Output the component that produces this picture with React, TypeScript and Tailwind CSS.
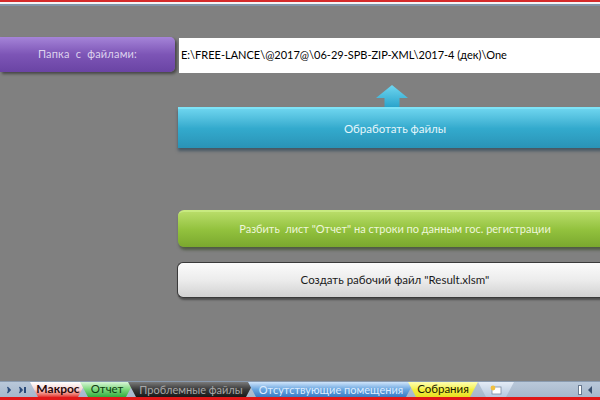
import { ChevronRight } from 'lucide-react'

type Sheet = { name: string; tab: string; text: string }

const sheets: Sheet[] = [
  { name: 'Макрос', tab: 'w-[56px] bg-gradient-to-b from-[#ffffff] via-[#f6d6d6] to-[#e03030]', text: 'text-[#2a0808] font-bold text-[12px]' },
  { name: 'Отчет', tab: 'w-[54px] bg-gradient-to-b from-[#d8f5d8] via-[#7cd87c] to-[#2fae3f]', text: 'text-[#0f3d12] text-[11.5px]' },
  { name: 'Проблемные файлы', tab: 'w-[126px] bg-gradient-to-b from-[#7a7a7a] via-[#3a3a3a] to-[#1a1a1a]', text: 'text-[#a8a8a8] text-[11px]' },
  { name: 'Отсутствующие помещения', tab: 'w-[166px] bg-gradient-to-b from-[#cfe4fa] via-[#6aa6e0] to-[#3a7cc4]', text: 'text-[#dcecff] text-[11px]' },
  { name: 'Собрания', tab: 'w-[70px] bg-gradient-to-b from-[#ffffb0] via-[#f4f040] to-[#e8e020]', text: 'text-[#1a1a00] text-[11.5px]' },
]

function SheetTabs() {
  return (
    <div className="h-[16px] flex items-stretch bg-gradient-to-b from-[#b9c8da] to-[#a6b7cb] border-t border-[#8a9bb0]">
      <div className="w-[30px] flex items-center gap-[2px] pl-[4px] text-[#2a4a7a]">
        <ChevronRight className="w-[10px] h-[10px] fill-[#2a4a7a]" strokeWidth={3} />
        <div className="flex items-center">
          <ChevronRight className="w-[10px] h-[10px] fill-[#2a4a7a]" strokeWidth={3} />
          <div className="w-[1.5px] h-[6px] bg-[#2a4a7a] -ml-[2px]" />
        </div>
      </div>
      {sheets.map((s) => (
        <div
          key={s.name}
          className={`${s.tab} -mr-[6px] flex items-center justify-center leading-none [clip-path:polygon(0_0,100%_0,calc(100%-8px)_100%,8px_100%)]`}
        >
          <span className={`${s.text} pb-[1px] whitespace-nowrap`}>{s.name}</span>
        </div>
      ))}
      <div className="w-[36px] ml-[6px] flex items-center justify-center bg-gradient-to-b from-[#e4ecf6] to-[#b6c8de] [clip-path:polygon(0_0,100%_0,calc(100%-8px)_100%,8px_100%)]">
        <svg width="14" height="10" viewBox="0 0 14 10">
          <rect x="3" y="2" width="9" height="7" fill="#fff" stroke="#7a8aa0" strokeWidth="0.8" />
          <circle cx="4" cy="3" r="2.4" fill="#f0c040" />
        </svg>
      </div>
      <div className="flex-1" />
      <div className="flex items-center gap-[6px] pr-[8px]">
        <div className="w-[4px] h-[10px] bg-white border border-[#6a7a90]" />
        <div className="w-0 h-0 border-y-[4px] border-y-transparent border-r-[4px] border-r-[#3a5070]" />
      </div>
    </div>
  )
}

export default function App() {
  return (
    <div className="w-[600px] h-[400px] flex flex-col bg-[#808080] overflow-hidden font-['Lato','Open_Sans',sans-serif]">
      {/* window frame stripes */}
      <div className="h-[2px] bg-[#d42a2a]" />
      <div className="h-[2px] bg-[#f4f4f6]" />
      <div className="h-[2px] bg-[#7f94a8]" />

      <div className="flex-1 flex flex-col">
        {/* folder row */}
        <div className="mt-[31px] flex items-start">
          <div className="w-[175px] h-[35px] rounded-r-[5px] bg-gradient-to-b from-[#a584d8] via-[#7d55b6] to-[#6a44a4] shadow-[2px_2px_3px_rgba(0,0,0,0.45)] flex items-center justify-center">
            <span className="text-[11px] text-[#ddd2ee] tracking-[0.2px]">Папка&nbsp; с&nbsp; файлами:</span>
          </div>
          <div className="ml-[4px] mt-[1px] flex-1 h-[35px] bg-white flex items-center px-[2px]">
            <span className="text-[11px] text-black">E:\FREE-LANCE\@2017@\06-29-SPB-ZIP-XML\2017-4 (дек)\One</span>
          </div>
        </div>

        {/* actions column */}
        <div className="ml-[178px] -mr-[12px] flex flex-col">
          <div className="mt-[12px] h-[22px] flex justify-center pr-[6px]">
            <svg width="32" height="22" viewBox="0 0 32 22">
              <defs>
                <linearGradient id="arrowFill" x1="0" y1="0" x2="0" y2="1">
                  <stop offset="0" stopColor="#6fd6f0" />
                  <stop offset="1" stopColor="#2aa4cc" />
                </linearGradient>
              </defs>
              <path d="M16 0 L32 13 L23.5 13 L23.5 22 L8.5 22 L8.5 13 L0 13 Z" fill="url(#arrowFill)" />
            </svg>
          </div>
          <button className="h-[41px] bg-gradient-to-b from-[#6cd4ee] via-[#33aacd] to-[#2a93b6] border-t-2 border-[#7ee2f6] shadow-[0_3px_3px_rgba(30,60,80,0.6)] flex items-center justify-center">
            <span className="text-[11.5px] text-[#e6f6fb]">Обработать файлы</span>
          </button>

          <button className="mt-[62px] h-[37px] rounded-l-[6px] bg-gradient-to-b from-[#b8dc68] via-[#93c23e] to-[#7aa82e] border-t-2 border-[#c8ea80] shadow-[1px_3px_3px_rgba(40,60,20,0.55)] flex items-center justify-center">
            <span className="text-[11px] text-[#eef6da]">Разбить&nbsp; лист "Отчет" на строки по данным гос. регистрации</span>
          </button>

          <button className="mt-[15px] -ml-[1px] h-[36px] rounded-l-[6px] bg-gradient-to-b from-[#fbfbfb] via-[#ececec] to-[#d2d2d2] border border-r-0 border-[#3a3a3a] shadow-[1px_2px_2px_rgba(0,0,0,0.4)] flex items-center justify-center">
            <span className="text-[11.5px] text-[#1a1a1a]">Создать рабочий файл "Result.xlsm"</span>
          </button>
        </div>

        <div className="flex-1" />
      </div>

      <SheetTabs />
      <div className="h-[3px] bg-[#e01818]" />
    </div>
  )
}
